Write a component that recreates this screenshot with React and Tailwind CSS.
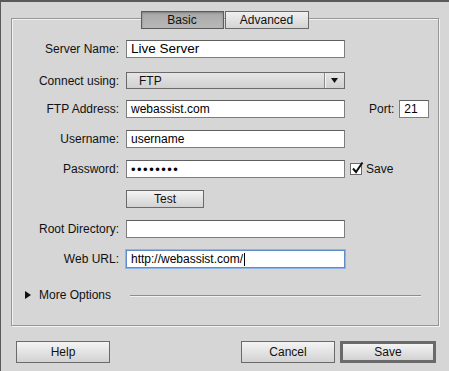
import React from "react";

const font = { fontFamily: '"Liberation Sans", Arial, sans-serif' };

const Field = ({ label, children, labelCls = "" }) => (
  <div className="flex items-center h-[18px]">
    <div className={`w-[107px] text-right text-[12px] text-[#111] ${labelCls}`}>{label}</div>
    <div className="ml-[7px] flex items-center">{children}</div>
  </div>
);

const TextBox = ({ value, big, focus, w = "w-[219px]" }) => (
  <div
    className={`${w} h-[18px] bg-white flex items-center pl-[4px] text-black ${
      big ? "text-[13.5px]" : "text-[12px]"
    } ${
      focus
        ? "border border-[#5e8ccc] shadow-[0_0_0_1px_#8fb4e6]"
        : "border border-[#7d7d7d] border-t-[#5f5f5f]"
    }`}
  >
    {value}
    {focus && <span className="w-px h-[13px] bg-black ml-[1px]" />}
  </div>
);

const Btn = ({ children, cls = "" }) => (
  <div
    className={`flex items-center justify-center text-[12px] text-[#111] bg-gradient-to-b from-[#f4f4f4] to-[#d2d2d2] border border-[#6a6a6a] ${cls}`}
  >
    {children}
  </div>
);

export default function App() {
  return (
    <div style={font} className="w-[449px] h-[371px] bg-[#d6d6d6] border-t-2 border-l border-[#5a5a5a] overflow-hidden">
      {/* group box */}
      <div className="mt-[16px] ml-[10px] w-[428px] h-[308px] border border-[#969696] shadow-[inset_1px_1px_0_#f2f2f2,1px_1px_0_#f2f2f2] flex flex-col">
        <div className="flex justify-center -mt-[8px] gap-[1px] pr-[1px]">
          <div className="w-[83px] h-[18px] flex items-center justify-center text-[12px] text-[#111] border border-[#5c5c5c] bg-gradient-to-b from-[#a8a8a8] to-[#b8b8b8] shadow-[inset_0_1px_2px_rgba(0,0,0,0.25)]">
            Basic
          </div>
          <div className="w-[84px] h-[18px] flex items-center justify-center text-[12px] text-[#111] border border-[#6a6a6a] bg-gradient-to-b from-[#f0f0f0] to-[#d4d4d4]">
            Advanced
          </div>
        </div>

        <div className="mt-[11px]">
          <Field label="Server Name:">
            <TextBox value="Live Server" big />
          </Field>
        </div>

        <div className="mt-[14px]">
          <div className="flex items-center h-[17px]">
            <div className="w-[107px] text-right text-[12px] text-[#111]">Connect using:</div>
            <div className="ml-[7px] w-[219px] h-[17px] border border-[#6a6a6a] bg-gradient-to-b from-[#e6e6e6] to-[#d0d0d0] flex items-center text-[12px] text-[#111]">
              <span className="pl-[12px] flex-1">FTP</span>
              <span className="w-px h-[15px] bg-[#8a8a8a] shadow-[1px_0_0_#f4f4f4]" />
              <svg width="18" height="15" viewBox="0 0 18 15" className="ml-[1px]">
                <path d="M5 5 L12 5 L8.5 10 Z" fill="#111" />
              </svg>
            </div>
          </div>
        </div>

        <div className="mt-[11px] flex items-center">
          <Field label="FTP Address:">
            <TextBox value="webassist.com" />
          </Field>
          <span className="ml-[24px] text-[12px] text-[#111]">Port:</span>
          <div className="ml-[5px]">
            <TextBox value="21" w="w-[30px]" />
          </div>
        </div>

        <div className="mt-[12px]">
          <Field label="Username:">
            <TextBox value="username" />
          </Field>
        </div>

        <div className="mt-[12px] flex items-center">
          <Field label="Password:">
            <TextBox value={<span className="text-[13px] tracking-[1.5px] leading-none">••••••••</span>} />
          </Field>
          <div className="ml-[5px] flex items-center">
            <div className="relative w-[12px] h-[12px] bg-white border border-[#6a6a6a]">
              <svg width="14" height="14" viewBox="0 0 14 14" className="absolute -top-[3px] left-0">
                <path d="M2 7.5 L5 11 L11.5 1.5" fill="none" stroke="#111" strokeWidth="2" />
              </svg>
            </div>
            <span className="ml-[4px] text-[12px] text-[#111]">Save</span>
          </div>
        </div>

        <div className="mt-[12px] pl-[114px]">
          <Btn cls="w-[78px] h-[18px]">Test</Btn>
        </div>

        <div className="mt-[12px]">
          <Field label="Root Directory:">
            <TextBox value="" />
          </Field>
        </div>

        <div className="mt-[12px]">
          <Field label="Web URL:">
            <TextBox value="http://webassist.com/" focus />
          </Field>
        </div>

        <div className="mt-[20px] h-[14px] flex items-center pl-[13px]">
          <svg width="6" height="8" viewBox="0 0 6 8">
            <path d="M0 0 L6 4 L0 8 Z" fill="#111" />
          </svg>
          <span className="ml-[8px] text-[12px] text-[#111]">More Options</span>
          <div className="ml-[19px] w-[291px] h-px bg-[#8e8e8e] shadow-[0_1px_0_#f2f2f2]" />
        </div>
      </div>

      {/* bottom buttons */}
      <div className="mt-[15px] flex items-center">
        <Btn cls="ml-[15px] w-[94px] h-[22px]">Help</Btn>
        <Btn cls="ml-[131px] w-[94px] h-[22px]">Cancel</Btn>
        <Btn cls="ml-[5px] w-[96px] h-[22px] border-[3px] border-[#4e4e4e]">Save</Btn>
      </div>
    </div>
  );
}
